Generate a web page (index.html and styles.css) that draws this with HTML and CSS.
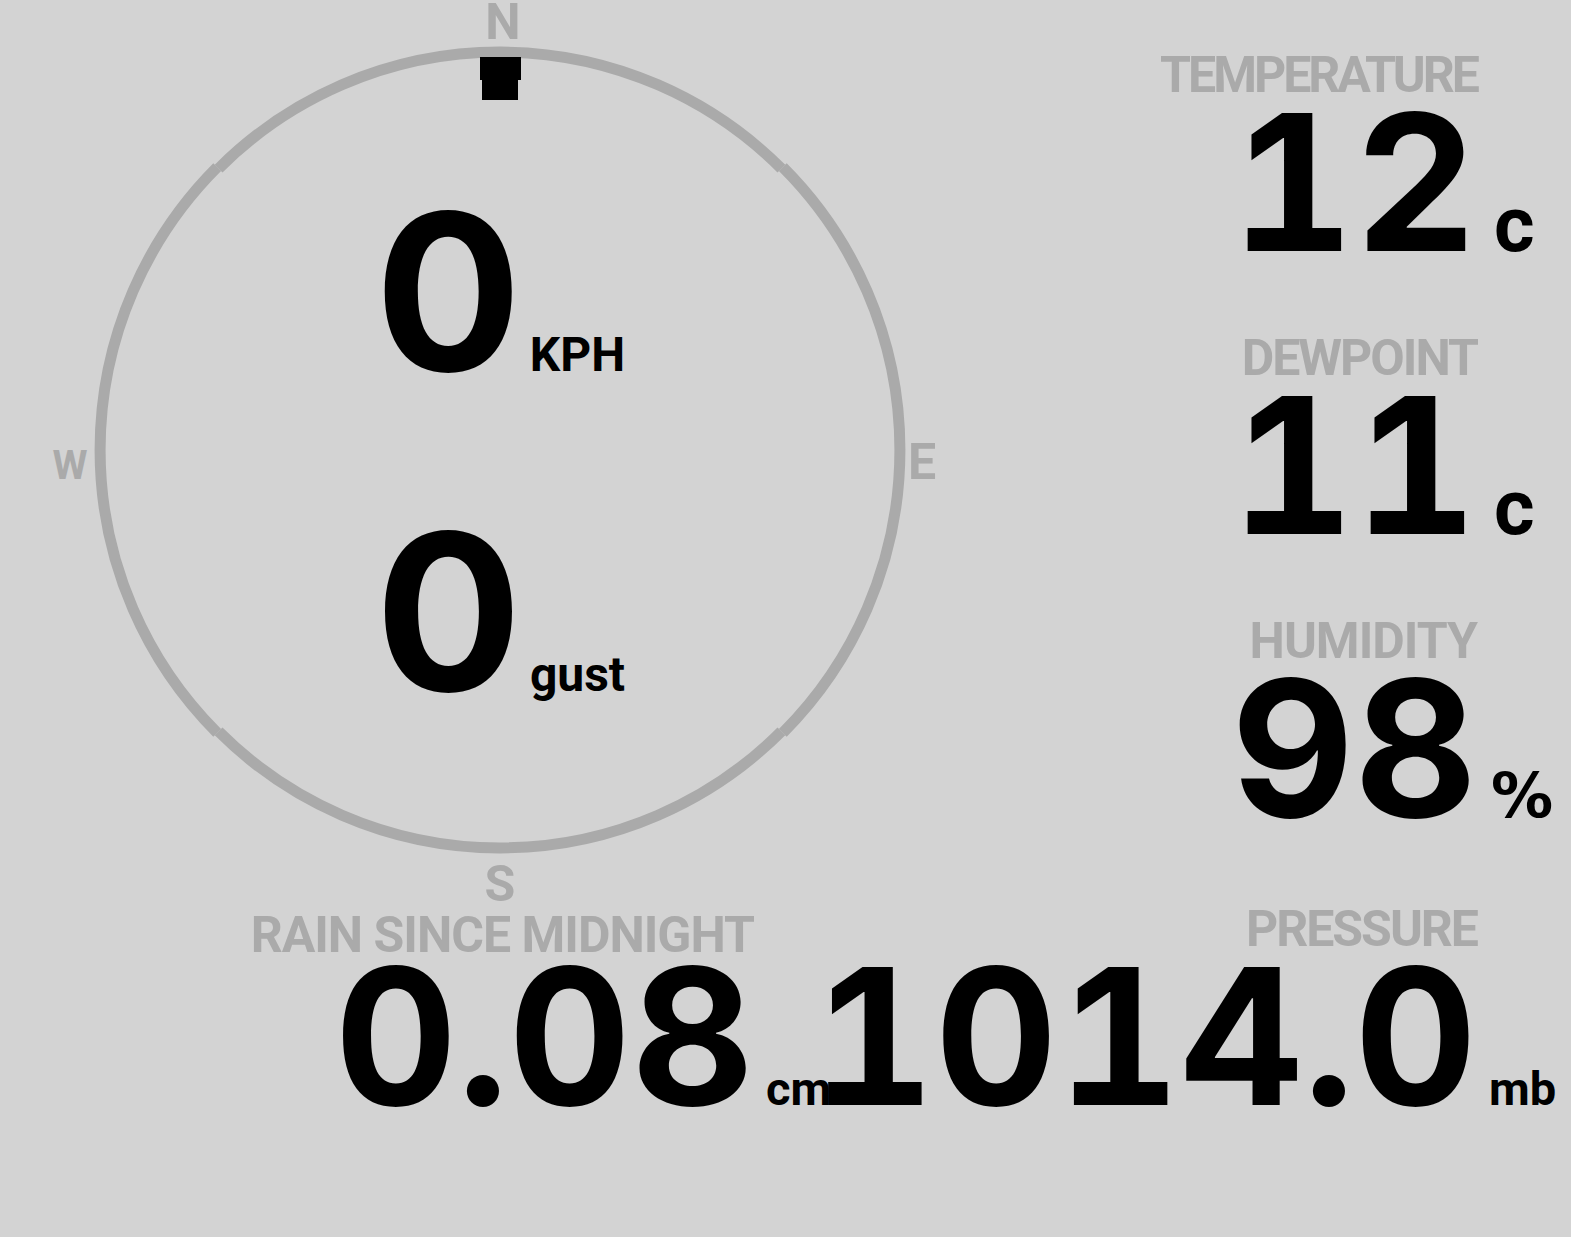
FILE: index.html
```html
<!DOCTYPE html>
<html lang="en">
<head>
  <meta charset="UTF-8">
  <meta name="viewport" content="width=device-width, initial-scale=1.0">
  <title>Weather Station</title>
  <link rel="stylesheet" href="styles.css">
</head>
<body>
  <div class="station">
    <div class="top">
      <div class="compass">
        <svg class="dial" width="1000" height="904" viewBox="0 0 1000 904">
          <!-- ring drawn as four quarter arcs, like the original canvas -->
          <g fill="none" stroke="#aaaaaa" stroke-width="11">
            <path d="M 218.6 168.6 A 398 398 0 0 1 781.4 168.6"/>
            <path d="M 782.8 167.2 A 400 400 0 0 1 782.8 732.8"/>
            <path d="M 781.4 731.4 A 398 398 0 0 1 218.6 731.4"/>
            <path d="M 217.2 732.8 A 400 400 0 0 1 217.2 167.2"/>
          </g>
          <!-- wind direction marker -->
          <polygon points="480,57 521,57 521,80 518,80 518,100 482,100 482,80 480,80" fill="#000"/>
        </svg>
        <span class="point point-n">N</span>
        <span class="point point-e">E</span>
        <span class="point point-s">S</span>
        <span class="point point-w">W</span>
        <div class="speed">
          <div class="speed-row"><span class="speed-value">0</span><span class="speed-unit">KPH</span></div>
          <div class="speed-row"><span class="speed-value">0</span><span class="speed-unit">gust</span></div>
        </div>
      </div>
      <div class="readings">
        <div class="reading">
          <div class="label label-tight">TEMPERATURE</div>
          <div class="value">12</div>
          <div class="unit unit-big">c</div>
        </div>
        <div class="reading">
          <div class="label">DEWPOINT</div>
          <div class="value">11</div>
          <div class="unit unit-big">c</div>
        </div>
        <div class="reading">
          <div class="label label-loose">HUMIDITY</div>
          <div class="value">98</div>
          <div class="unit unit-pct">%</div>
        </div>
      </div>
    </div>
    <div class="bottom">
      <div class="rain">
        <div class="reading reading-rain">
          <div class="label label-loose">RAIN SINCE MIDNIGHT</div>
          <div class="value">0.08</div>
          <div class="unit">cm</div>
        </div>
      </div>
      <div class="pressure">
        <div class="reading">
          <div class="label">PRESSURE</div>
          <div class="value">1014.0</div>
          <div class="unit">mb</div>
        </div>
      </div>
    </div>
  </div>
</body>
</html>
```

FILE: styles.css
```css
html {
  background-color: #d3d3d3;
}
body {
  margin: 0;
  font-family: Roboto, "Liberation Sans", sans-serif;
  font-weight: 700;
  color: #000;
}
.top {
  display: flex;
  height: 904px;
}
.compass {
  position: relative;
  width: 1000px;
  flex-shrink: 0;
  display: flex;
  align-items: center;
  justify-content: center;
}
.dial {
  position: absolute;
  left: 0;
  top: 0;
}
.point {
  position: absolute;
  font-size: 50px;
  line-height: 40px;
  color: #aaa;
}
.point-n { left: 503px; top: 2px; transform: translateX(-50%); }
.point-s { left: 500px; top: 864px; transform: translateX(-50%); }
.point-e { left: 908px; top: 442px; }
.point-w { left: 70px; top: 450px; font-size: 40px; line-height: 32px; transform: translateX(-50%); }
.speed {
  position: relative;
  display: flex;
  flex-direction: column;
  align-items: center;
}
.speed-row {
  display: flex;
  align-items: baseline;
}
.speed-value {
  font-family: Inter, "DejaVu Sans", sans-serif;
  font-size: 218px;
  line-height: 320px;
}
.speed-unit {
  font-size: 48px;
  margin-left: 8px;
}

/* readings: label and value share a right edge, unit hangs to the right */
.readings {
  flex: 1;
  display: flex;
  flex-direction: column;
  align-items: flex-end;
  padding-top: 50px;
  gap: 76px;
}
.reading {
  display: grid;
  grid-template-columns: auto 94px;
  grid-template-rows: 50px 150px;
  row-gap: 7px;
  flex-shrink: 0;
}
.reading-rain {
  padding-top: 6px;
  row-gap: 1px;
}
.label {
  grid-column: 1;
  justify-self: end;
  font-size: 50px;
  line-height: 50px;
  letter-spacing: -2px;
  color: #aaa;
  white-space: nowrap;
}
.label-tight {
  letter-spacing: -3px;
}
.label-loose {
  letter-spacing: -1px;
}
.value {
  grid-column: 1;
  grid-row: 2;
  justify-self: end;
  align-self: baseline;
  font-family: Inter, "DejaVu Sans", sans-serif;
  font-size: 190px;
  line-height: 150px;
  font-variant-numeric: tabular-nums;
  white-space: nowrap;
}
.unit {
  grid-column: 2;
  grid-row: 2;
  align-self: baseline;
  padding-left: 12px;
  font-size: 47px;
  line-height: 1;
}
.unit-big {
  padding-left: 17px;
  font-size: 78px;
}
.unit-pct {
  padding-left: 14px;
  font-family: "DejaVu Sans", sans-serif;
  font-size: 62px;
}
.bottom {
  display: flex;
}
.rain {
  width: 848px;
  flex-shrink: 0;
  display: flex;
  justify-content: flex-end;
}
.pressure {
  flex: 1;
  min-width: 0;
  display: flex;
  justify-content: flex-end;
}
```
